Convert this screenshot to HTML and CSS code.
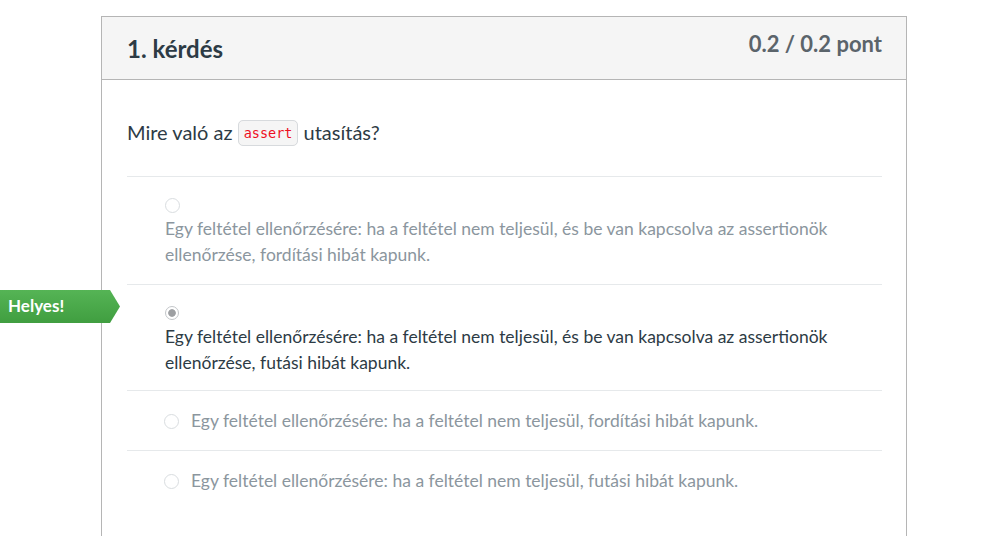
FILE: index.html
```html
<!DOCTYPE html>
<html lang="hu">
<head>
<meta charset="utf-8">
<title>1. kérdés</title>
<link rel="stylesheet" href="styles.css">
</head>
<body>
<div class="question">
  <div class="q-header">
    <div class="q-title">1. kérdés</div>
    <div class="q-score">0.2 / 0.2 pont</div>
  </div>
  <div class="q-body">
    <div class="q-text">Mire való az <code class="code">assert</code> utasítás?</div>
    <div class="answers">
      <div class="answer stacked">
        <div class="radio-line"><span class="radio"></span></div>
        <div class="answer-text">Egy feltétel ellenőrzésére: ha a feltétel nem teljesül, és be van kapcsolva az assertionök ellenőrzése, fordítási hibát kapunk.</div>
      </div>
      <div class="answer stacked selected">
        <div class="badge">Helyes!</div>
        <div class="radio-line"><span class="radio checked"></span></div>
        <div class="answer-text">Egy feltétel ellenőrzésére: ha a feltétel nem teljesül, és be van kapcsolva az assertionök ellenőrzése, futási hibát kapunk.</div>
      </div>
      <div class="answer inline">
        <span class="radio"></span>
        <div class="answer-text">Egy feltétel ellenőrzésére: ha a feltétel nem teljesül, fordítási hibát kapunk.</div>
      </div>
      <div class="answer inline">
        <span class="radio"></span>
        <div class="answer-text">Egy feltétel ellenőrzésére: ha a feltétel nem teljesül, futási hibát kapunk.</div>
      </div>
    </div>
  </div>
</div>
</body>
</html>
```

FILE: styles.css
```css
* { box-sizing: border-box; }
html, body {
  margin: 0;
  padding: 0;
  background: #fff;
  font-family: Lato, "Noto Sans", "Liberation Sans", sans-serif;
  color: #2d3b45;
}
.question {
  margin: 16px 0 0 101px;
  width: 806px;
  height: 540px;
  border: 1px solid #b5b5b5;
  border-bottom: none;
}
.q-header {
  height: 63px;
  background: #f5f5f5;
  border-bottom: 1px solid #b5b5b5;
  display: flex;
  justify-content: space-between;
  align-items: flex-start;
  padding: 0 24px 0 25px;
}
.q-title {
  font-size: 24px;
  font-weight: 700;
  line-height: 30px;
  margin-top: 17px;
  color: #2d3b45;
}
.q-score {
  font-size: 22px;
  font-weight: 700;
  line-height: 26px;
  margin-top: 14px;
  color: #5b646b;
}
.q-body {
  padding: 0 24px 0 25px;
}
.q-text {
  font-size: 20px;
  line-height: 28px;
  margin-top: 38px;
  margin-bottom: 29px;
  color: #2d3b45;
}
.code {
  font-family: "DejaVu Sans Mono", "Liberation Mono", monospace;
  font-size: 13.5px;
  color: #ee0f1f;
  background: #f5f5f5;
  border: 1px solid #d7dadd;
  border-radius: 5px;
  padding: 4px 5px 4px;
  vertical-align: 2px;
}
.answer {
  position: relative;
  border-top: 1px solid #e6e9eb;
  padding: 17px 0 16px 38px;
  font-size: 17.5px;
  line-height: 26px;
  color: #8b969e;
}
.answer.selected {
  color: #2d3b45;
  padding-bottom: 14px;
}
.radio-line {
  height: 22px;
  display: flex;
  align-items: center;
}
.answer-text { max-width: 710px; }
.answer.inline {
  display: flex;
  align-items: center;
  gap: 12px;
  padding: 17px 0 16px 37px;
}
.radio {
  display: inline-block;
  width: 15px;
  height: 15px;
  border-radius: 50%;
  border: 1.5px solid #d9dde0;
  background: #fff;
  flex: none;
}
.radio.checked {
  width: 14px;
  height: 14px;
  border: 1.5px solid #c3c6c9;
  background: radial-gradient(circle, #9d9fa2 0, #9d9fa2 3.4px, #fff 4.2px);
}
.badge {
  position: absolute;
  left: -127px;
  top: 5px;
  width: 120px;
  height: 33px;
  padding-left: 8px;
  background: linear-gradient(#55b455, #409e40);
  clip-path: polygon(0 0, 110px 0, 120px 50%, 110px 100%, 0 100%);
  color: #fff;
  font-weight: 700;
  font-size: 17px;
  line-height: 31px;
}
```
